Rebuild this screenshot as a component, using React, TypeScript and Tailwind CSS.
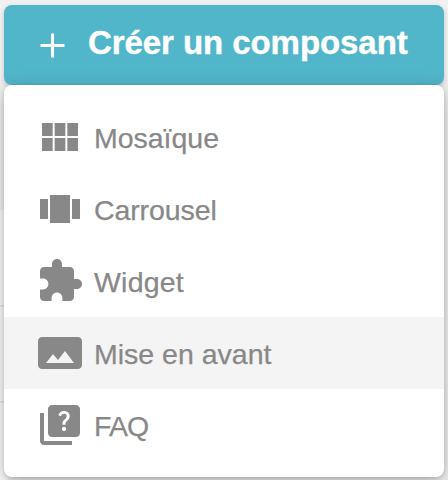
import React from "react";

const items = [
  {
    label: "Mosaïque",
    tracking: "tracking-[-0.02px]",
    path: "M14.67 5v6.5H9.33V5h5.34zm1 6.5H21V5h-5.33v6.5zm-1 7.5v-6.5H9.33V19h5.34zm1-6.5V19H21v-6.5h-5.33zm-7.34 0H3V19h5.33v-6.5zm0-1V5H3v6.5h5.33z",
  },
  {
    label: "Carrousel",
    tracking: "tracking-[-0.1px]",
    path: "M2 7h4v10H2V7zm5 12h10V5H7v14zM18 7h4v10h-4V7z",
  },
  {
    label: "Widget",
    tracking: "tracking-[0.2px]",
    path: "M20.5 11H19V7c0-1.1-.9-2-2-2h-4V3.5C13 2.12 11.88 1 10.5 1S8 2.12 8 3.5V5H4c-1.1 0-1.99.9-1.99 2v3.8H3.5c1.49 0 2.7 1.21 2.7 2.7s-1.21 2.7-2.7 2.7H2V20c0 1.1.9 2 2 2h3.8v-1.5c0-1.49 1.21-2.7 2.7-2.7 1.49 0 2.7 1.21 2.7 2.7V22H17c1.1 0 2-.9 2-2v-4h1.5c1.38 0 2.5-1.12 2.5-2.5S21.88 11 20.5 11z",
  },
  {
    label: "Mise en avant",
    tracking: "tracking-normal",
    active: true,
    path: "M23 18V6c0-1.1-.9-2-2-2H3c-1.1 0-2 .9-2 2v12c0 1.1.9 2 2 2h18c1.1 0 2-.9 2-2zM8.5 12.5l2.5 3.01L14.5 11l4.5 6H5l3.5-4.5z",
  },
  {
    label: "FAQ",
    tracking: "tracking-[-0.9px]",
    path: "M4 6H2v14c0 1.1.9 2 2 2h14v-2H4V6zm16-4H8c-1.1 0-2 .9-2 2v12c0 1.1.9 2 2 2h12c1.1 0 2-.9 2-2V4c0-1.1-.9-2-2-2zm-5.99 13c-.59 0-1.05-.47-1.05-1.05 0-.59.47-1.04 1.05-1.04.59 0 1.04.45 1.04 1.04-.01.58-.45 1.05-1.04 1.05zm2.5-6.17c-.63.93-1.23 1.21-1.56 1.81-.13.24-.18.4-.18 1.18h-1.52c0-.41-.06-1.08.26-1.65.41-.73 1.18-1.16 1.63-1.8.48-.68.21-1.94-1.14-1.94-.88 0-1.32.67-1.5 1.23l-1.37-.57C11.51 5.96 12.52 5 13.99 5c1.23 0 2.08.56 2.51 1.26.37.61.58 1.73.01 2.57z",
  },
];

interface iconProps {
  path: string;
  className: string;
}

const Icon = ({ path, className }: iconProps) => (
  <svg viewBox="0 0 24 24" fill="currentColor" className={className}>
    <path d={path} />
  </svg>
);

export default function App() {
  return (
    <div className="h-[480px] w-[448px] overflow-hidden bg-[#f1f1f1] bg-[linear-gradient(#f1f1f1_0_210px,#fafafa_210px_305px,#e6e6e6_305px_307px,#fafafa_307px_401px,#e6e6e6_401px_403px,#fafafa_403px)] bg-[length:8px_100%] bg-no-repeat px-1 pt-[5px] font-['Liberation_Sans',Arial,sans-serif]">
      <button className="flex h-20 w-full items-center rounded-[8px] bg-[#52b6ca] pl-[27.5px] text-white shadow-[0_2px_5px_rgba(0,0,0,0.2)]">
        <Icon
          path="M19 12.9h-6.1V19h-1.8v-6.1H5v-1.8h6.1V5h1.8v6.1H19v1.8z"
          className="size-[41px] shrink-0"
        />
        <span className="-mt-[5px] ml-[15.5px] whitespace-nowrap text-[33px] leading-10 font-bold tracking-[-0.07px] [-webkit-text-stroke:0.4px]">
          Créer un composant
        </span>
      </button>
      <ul className="relative h-[392px] rounded-[8px] bg-white py-4 shadow-[0_4px_18px_rgba(0,0,0,0.25),0_2px_4px_rgba(0,0,0,0.12)]">
        {items.map((item) => (
          <li
            key={item.label}
            className={`flex h-[72px] items-center pl-8 text-[#888888] ${
              item.active ? "bg-[#f4f4f4]" : ""
            }`}
          >
            <Icon path={item.path} className="size-12 shrink-0" />
            <span
              className={`mt-px ml-[10px] whitespace-nowrap text-[28.5px] leading-8 [-webkit-text-stroke:0.25px] ${item.tracking}`}
            >
              {item.label}
            </span>
          </li>
        ))}
      </ul>
    </div>
  );
}
